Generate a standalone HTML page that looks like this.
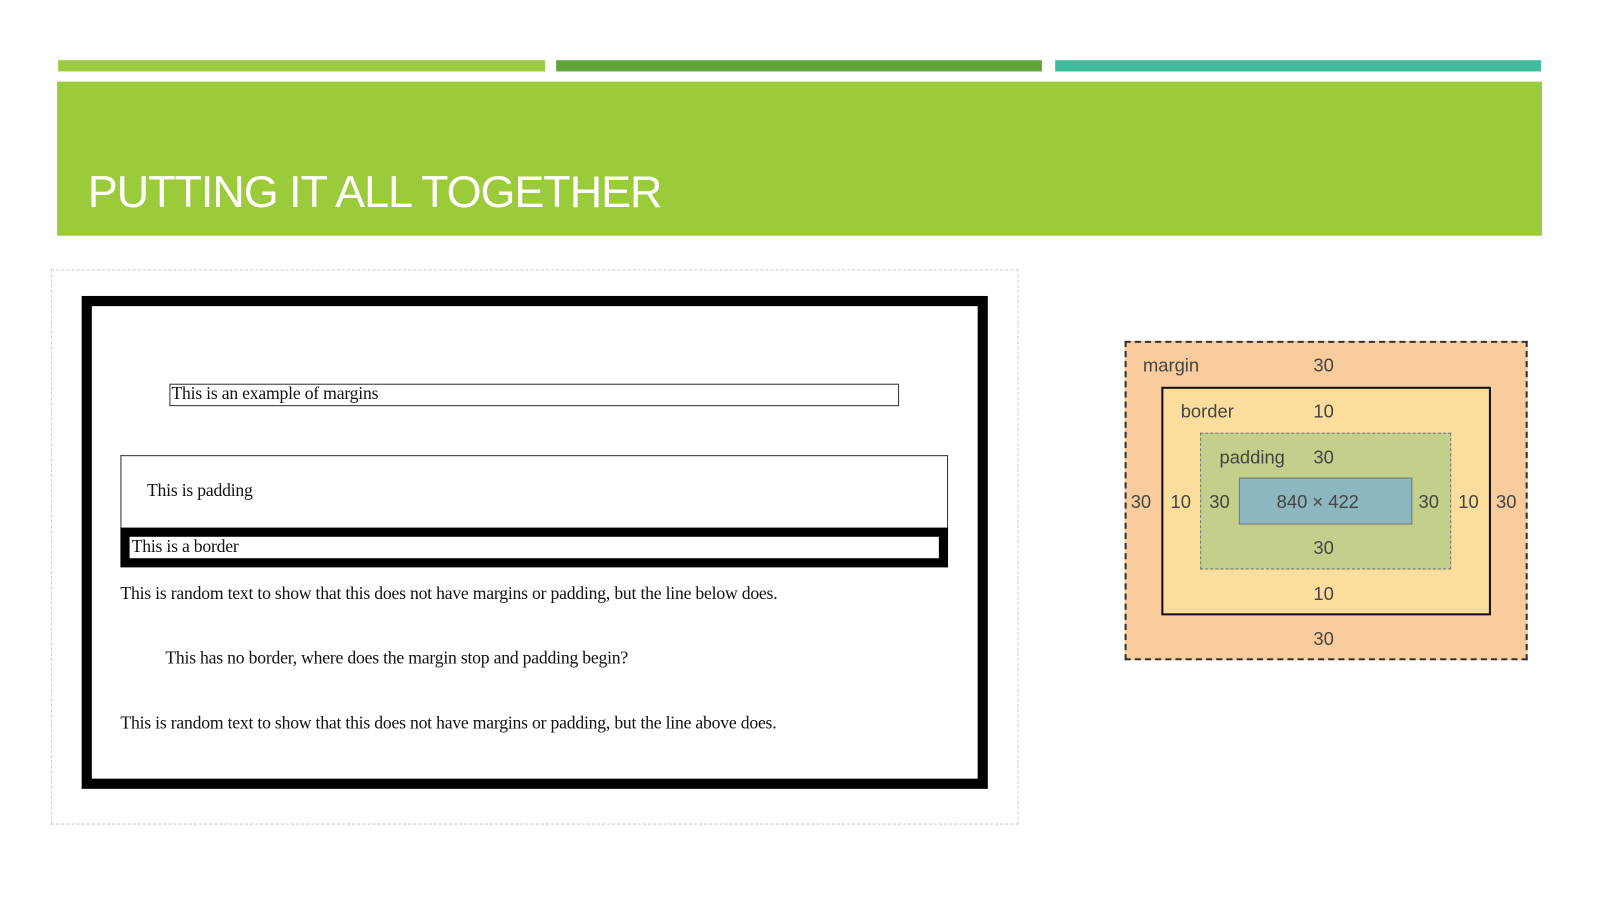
<!DOCTYPE html>
<html><head><style>
body{margin:0;width:1600px;height:900px;background:#fff;position:relative;overflow:hidden;font-family:"Liberation Serif",serif}
#w{position:absolute;left:0;top:0;width:1560px;height:878px;transform:scale(1.0205);transform-origin:0 0}
.a{position:absolute;box-sizing:border-box}
.s{font-family:"Liberation Sans",sans-serif;color:#444;font-size:18px;position:absolute;line-height:20px}
.t{position:absolute;font-size:17.3px;color:#111;line-height:18px;white-space:nowrap;letter-spacing:-0.2px}
</style></head><body><div id="w">
<div class="a" style="left:57px;top:59px;width:477px;height:11px;background:#9acb3c"></div>
<div class="a" style="left:545px;top:59px;width:476px;height:11px;background:#62a43a"></div>
<div class="a" style="left:1034px;top:59px;width:476px;height:11px;background:#3dbd9d"></div>
<div class="a" style="left:56px;top:80px;width:1455px;height:151px;background:#9bcb3b"></div>
<div class="a" style="left:86px;top:164px;color:#fff;font-family:'Liberation Sans',sans-serif;font-size:44px;letter-spacing:-1px;line-height:50px">PUTTING IT ALL TOGETHER</div>

<div class="a" style="left:50px;top:264px;width:948px;height:544px;border:1px dashed #ccc"></div>
<div class="a" style="left:80px;top:290px;width:888px;height:483px;border:10px solid #000"></div>
<div class="a" style="left:166px;top:376px;width:715px;height:22px;border:1px solid #333"></div>
<div class="t" style="left:168px;top:377px">This is an example of margins</div>
<div class="a" style="left:118px;top:446px;width:811px;height:72px;border:1px solid #333;border-bottom:none"></div>
<div class="t" style="left:144px;top:472px">This is padding</div>
<div class="a" style="left:118px;top:517px;width:811px;height:39px;border:9px solid #000"></div>
<div class="t" style="left:129px;top:527px">This is a border</div>
<div class="t" style="left:118px;top:573px">This is random text to show that this does not have margins or padding, but the line below does.</div>
<div class="t" style="left:162px;top:636px">This has no border, where does the margin stop and padding begin?</div>
<div class="t" style="left:118px;top:700px">This is random text to show that this does not have margins or padding, but the line above does.</div>

<div class="a" style="left:1102px;top:334px;width:395px;height:313px;background:#f9cc9d;border:2px dashed #333"></div>
<div class="a" style="left:1138px;top:379px;width:323px;height:224px;background:#fddd9b;border:2px solid #111"></div>
<div class="a" style="left:1176px;top:424px;width:246px;height:134px;background:#c3d08b;border:1px dashed #777"></div>
<div class="a" style="left:1214px;top:468px;width:170px;height:46px;background:#8cb6c0;border:1px solid #777"></div>
<div class="s" style="left:1120px;top:348px">margin</div>
<div class="s" style="left:1287px;top:348px">30</div>
<div class="s" style="left:1157px;top:393px">border</div>
<div class="s" style="left:1287px;top:393px">10</div>
<div class="s" style="left:1195px;top:438px">padding</div>
<div class="s" style="left:1287px;top:438px">30</div>
<div class="s" style="left:1108px;top:482px">30</div>
<div class="s" style="left:1147px;top:482px">10</div>
<div class="s" style="left:1185px;top:482px">30</div>
<div class="s" style="left:1251px;top:482px">840 × 422</div>
<div class="s" style="left:1390px;top:482px">30</div>
<div class="s" style="left:1429px;top:482px">10</div>
<div class="s" style="left:1466px;top:482px">30</div>
<div class="s" style="left:1287px;top:527px">30</div>
<div class="s" style="left:1287px;top:572px">10</div>
<div class="s" style="left:1287px;top:616px">30</div>
</div></body></html>
